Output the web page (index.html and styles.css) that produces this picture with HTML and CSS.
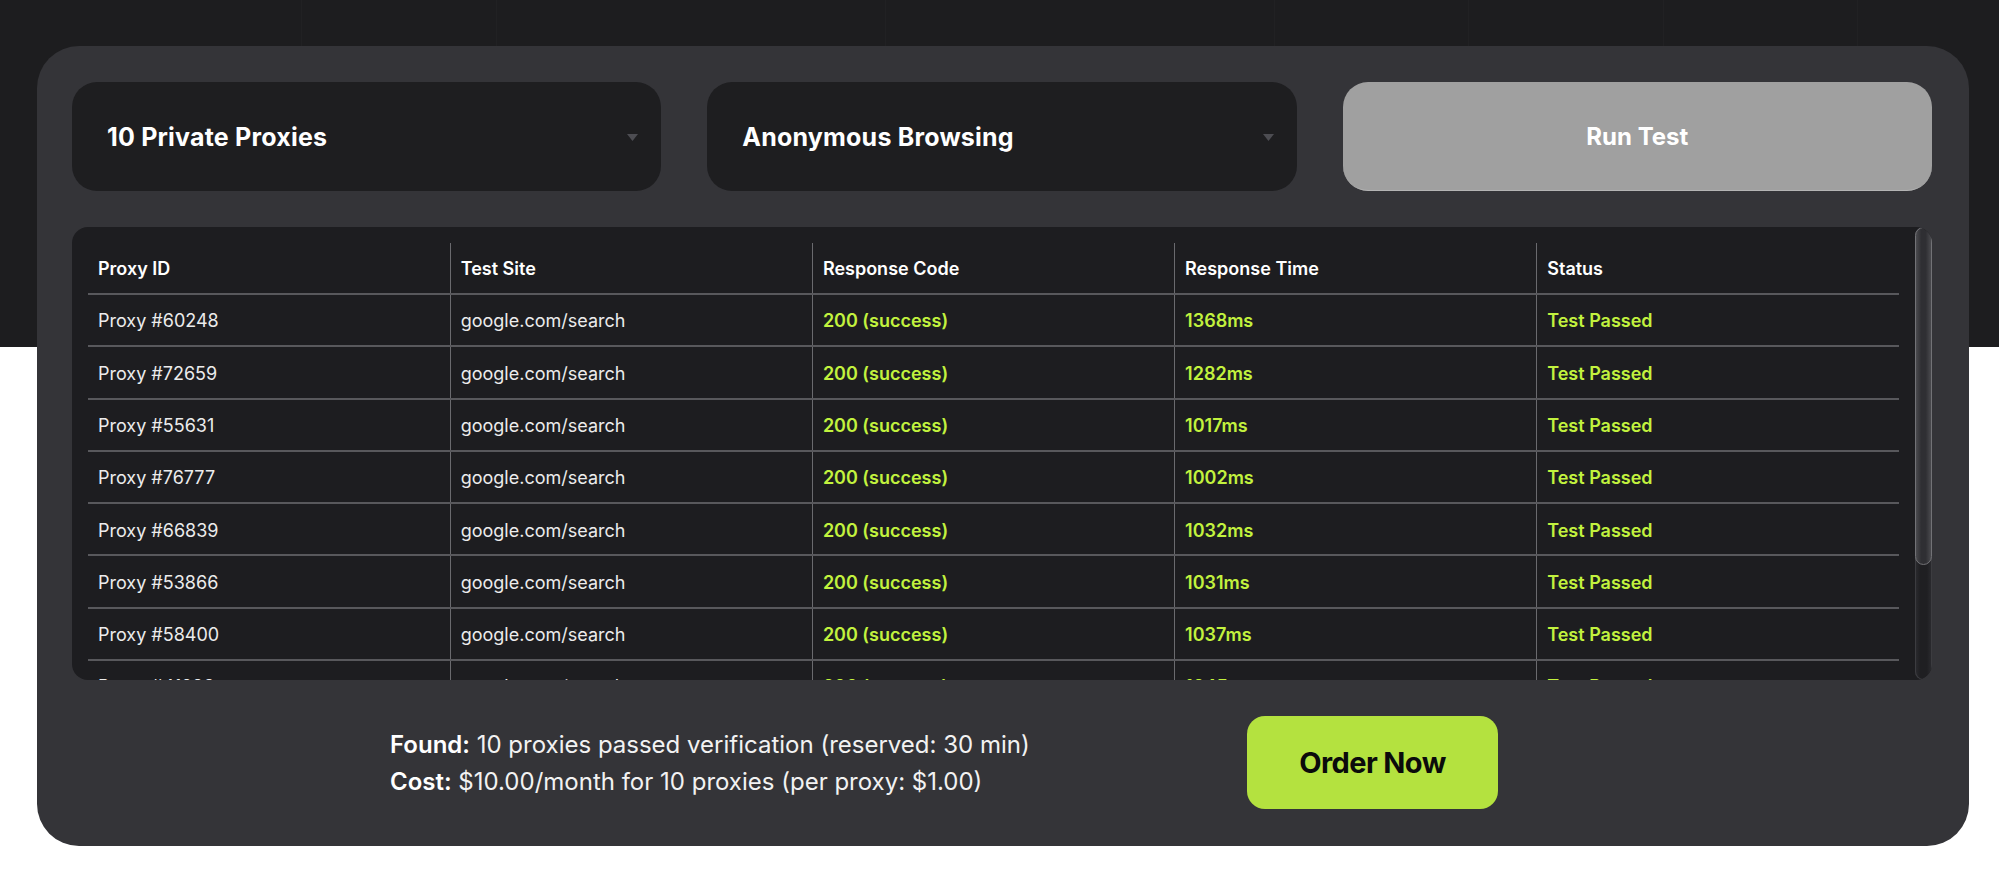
FILE: index.html
```html
<!DOCTYPE html>
<html lang="en">
<head>
<meta charset="utf-8">
<title>Proxy Tester</title>
<link rel="stylesheet" href="styles.css">
</head>
<body>
<section class="stage">
  <div class="card">
    <div class="controls">
      <div class="select">
        <span class="select-label">10 Private Proxies</span>
        <svg class="caret" width="11" height="7" viewBox="0 0 11 7"><polygon points="0,0 11,0 5.5,7" fill="#4d4d52"/></svg>
      </div>
      <div class="select">
        <span class="select-label">Anonymous Browsing</span>
        <svg class="caret" width="11" height="7" viewBox="0 0 11 7"><polygon points="0,0 11,0 5.5,7" fill="#4d4d52"/></svg>
      </div>
      <button class="run-btn" type="button">Run Test</button>
    </div>

    <div class="results">
      <div class="table-wrap">
        <table class="results-table">
          <thead>
            <tr><th>Proxy ID</th><th>Test Site</th><th>Response Code</th><th>Response Time</th><th>Status</th></tr>
          </thead>
          <tbody>
            <tr><td>Proxy #60248</td><td>google.com/search</td><td class="ok">200 (success)</td><td class="ok">1368ms</td><td class="ok">Test Passed</td></tr>
            <tr><td>Proxy #72659</td><td>google.com/search</td><td class="ok">200 (success)</td><td class="ok">1282ms</td><td class="ok">Test Passed</td></tr>
            <tr><td>Proxy #55631</td><td>google.com/search</td><td class="ok">200 (success)</td><td class="ok">1017ms</td><td class="ok">Test Passed</td></tr>
            <tr><td>Proxy #76777</td><td>google.com/search</td><td class="ok">200 (success)</td><td class="ok">1002ms</td><td class="ok">Test Passed</td></tr>
            <tr><td>Proxy #66839</td><td>google.com/search</td><td class="ok">200 (success)</td><td class="ok">1032ms</td><td class="ok">Test Passed</td></tr>
            <tr><td>Proxy #53866</td><td>google.com/search</td><td class="ok">200 (success)</td><td class="ok">1031ms</td><td class="ok">Test Passed</td></tr>
            <tr><td>Proxy #58400</td><td>google.com/search</td><td class="ok">200 (success)</td><td class="ok">1037ms</td><td class="ok">Test Passed</td></tr>
            <tr><td>Proxy #41293</td><td>google.com/search</td><td class="ok">200 (success)</td><td class="ok">1045ms</td><td class="ok">Test Passed</td></tr>
            <tr><td>Proxy #38172</td><td>google.com/search</td><td class="ok">200 (success)</td><td class="ok">1098ms</td><td class="ok">Test Passed</td></tr>
            <tr><td>Proxy #29564</td><td>google.com/search</td><td class="ok">200 (success)</td><td class="ok">1120ms</td><td class="ok">Test Passed</td></tr>
          </tbody>
        </table>
      </div>
      <div class="scrollbar">
        <div class="scroll-thumb"></div>
      </div>
    </div>

    <div class="summary">
      <div class="summary-text">
        <p><strong>Found:</strong> 10 proxies passed verification (reserved: 30 min)</p>
        <p><strong>Cost:</strong> $10.00/month for 10 proxies (per proxy: $1.00)</p>
      </div>
      <button class="order-btn" type="button">Order Now</button>
    </div>
  </div>
</section>
</body>
</html>
```

FILE: styles.css
```css
* { box-sizing: border-box; }

html, body {
  margin: 0;
  padding: 0;
  background: #ffffff;
  font-family: Inter, "Noto Sans", "Liberation Sans", sans-serif;
}

.stage {
  padding: 46px 30px 35px 37px;
  background:
    linear-gradient(to bottom, transparent 347px, #ffffff 347px),
    repeating-linear-gradient(to right, transparent 0, transparent 193.5px, rgba(255,255,255,0.018) 193.5px, rgba(255,255,255,0.018) 194.5px) 108px 0 / 100% 347px no-repeat,
    #1d1d1f;
  background-color: #1d1d1f;
}

.card {
  width: 1932px;
  background: #343438;
  border-radius: 42px;
  padding: 36px 37px 37px 35px;
}

.controls {
  display: grid;
  grid-template-columns: 1fr 1fr 1fr;
  gap: 46px;
  height: 109px;
}

.select {
  display: flex;
  align-items: center;
  justify-content: space-between;
  background: #1e1e20;
  border-radius: 25px;
  padding: 0 23px 0 35px;
}

.select-label {
  color: #ffffff;
  font-size: 25px;
  font-weight: 700;
  letter-spacing: 0.2px;
}

.caret { display: block; margin-top: 2px; }

.run-btn {
  border: none;
  border-bottom: 1px solid #b4b4b4;
  background: #a0a0a0;
  border-radius: 25px;
  color: #ffffff;
  font-family: inherit;
  font-size: 24px;
  font-weight: 700;
  padding: 0;
}

.results {
  display: flex;
  margin-top: 36px;
  height: 453px;
  background: #1d1d20;
  border-radius: 16px;
  overflow: hidden;
}

.table-wrap {
  flex: 1;
  overflow: hidden;
  padding: 16px 16px 0 16px;
}

.results-table {
  width: 100%;
  table-layout: fixed;
  border-collapse: collapse;
  color: #ececec;
  font-size: 18px;
}

.results-table th,
.results-table td {
  text-align: left;
  padding: 15.4px 10px 12.9px;
  line-height: 22px;
  border-bottom: 2px solid #58585c;
  white-space: nowrap;
}

.results-table th {
  color: #ffffff;
  font-weight: 600;
  padding: 15px 10px 14px;
  line-height: 21px;
}

.results-table th + th,
.results-table td + td {
  border-left: 1px solid #6a6a6e;
}

.results-table td.ok {
  color: #c2f23e;
  font-weight: 600;
}

.scrollbar {
  flex: 0 0 17px;
  display: flex;
  flex-direction: column;
  border-radius: 9px;
  background: linear-gradient(to right, #2c2c30 0, #1f1f22 30%, #1f1f22 70%, #2c2c30 100%);
  box-shadow: inset 0 0 0 1px #3c3c40;
}

.scroll-thumb {
  height: 338px;
  border-radius: 9px;
  border: 1.5px solid #727276;
  background: linear-gradient(to right, #4a4a4e 0, #2f2f33 35%, #2f2f33 65%, #4a4a4e 100%);
}

.summary {
  display: flex;
  align-items: center;
  margin-top: 36px;
  padding-left: 318px;
  height: 93px;
}

.summary-text {
  flex: 0 0 857px;
  color: #f2f2f2;
  font-size: 24px;
  line-height: 37px;
}

.summary-text p { margin: 0; }

.summary-text strong { font-weight: 600; color: #ffffff; }

.order-btn {
  width: 251px;
  height: 93px;
  border: none;
  border-radius: 18px;
  background: #b4e23f;
  color: #0b0b0b;
  font-family: inherit;
  font-size: 29px;
  font-weight: 700;
  letter-spacing: -0.6px;
  padding: 0;
}
```
